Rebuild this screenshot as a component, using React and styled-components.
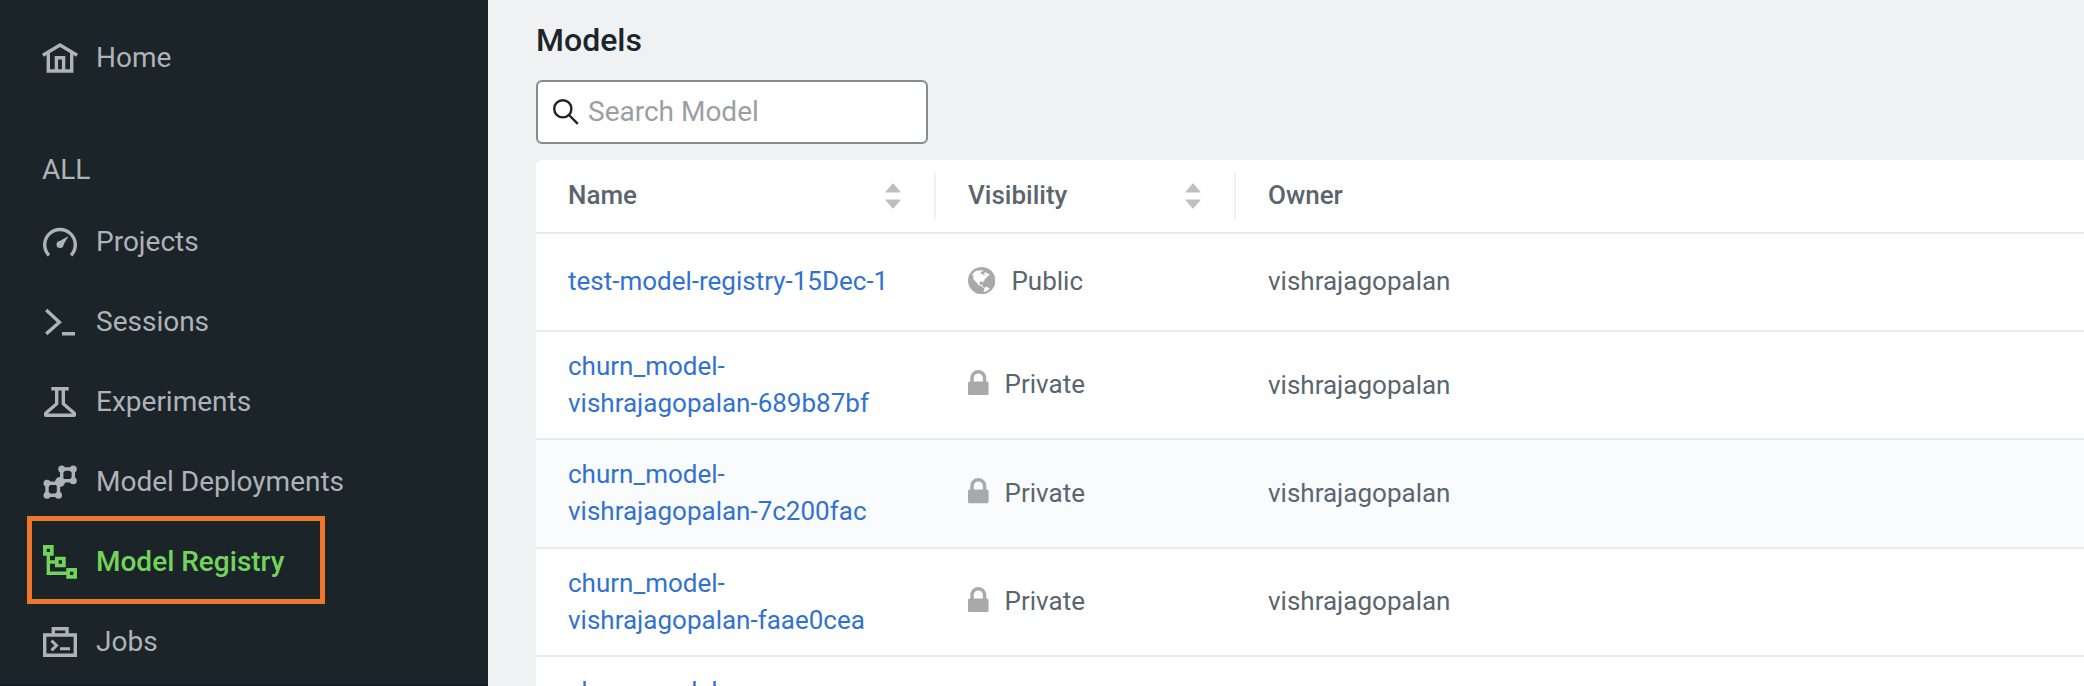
import React from 'react';
import styled, { createGlobalStyle } from 'styled-components';

const Global = createGlobalStyle`
  * { box-sizing: border-box; }
  body { margin: 0; overflow: hidden; font-family: Roboto, "Liberation Sans", sans-serif; }
`;

const Page = styled.div`
  display: flex;
  height: 686px;
  overflow: hidden;
  background: #f0f1f3;
`;

const Sidebar = styled.nav`
  flex: none;
  width: 488px;
  padding-top: 17px;
  background: #1a2429;
  border-bottom: 2px solid #151d26;
`;

const NavItem = styled.a`
  position: relative;
  display: flex;
  align-items: center;
  gap: 18px;
  height: 80px;
  padding-left: 42px;
  font-size: 28px;
  font-weight: ${p => (p.$active ? 500 : 400)};
  color: ${p => (p.$active ? '#73d45c' : '#afb2b8')};
`;

const NavIcon = styled.svg`
  flex: none;
  width: 36px;
  height: 36px;
  fill: none;
  stroke: currentColor;
  stroke-width: 3.4;
`;

const Highlight = styled.span`
  position: absolute;
  left: 27px;
  top: -5px;
  width: 298px;
  height: 88px;
  border: 5px solid #f0752d;
`;

const SectionTitle = styled.div`
  height: 104px;
  padding: 56px 0 0 42px;
  font-size: 28px;
  line-height: 33px;
  color: #afb2b8;
`;

const Content = styled.main`
  flex: 1;
  min-width: 0;
  padding-left: 48px;
`;

const Title = styled.h1`
  margin: 0;
  height: 80px;
  padding-top: 21px;
  font-size: 32px;
  line-height: 38px;
  font-weight: 500;
  color: #1b252b;
`;

const SearchBox = styled.label`
  display: flex;
  align-items: center;
  width: 392px;
  height: 64px;
  padding-left: 14px;
  gap: 8px;
  border: 2px solid #858b90;
  border-radius: 6px;
  background: #fff;
  margin-bottom: 16px;
`;

const SearchInput = styled.input`
  width: 300px;
  height: 40px;
  padding: 0 0 2px;
  border: 0;
  outline: 0;
  background: none;
  font: 400 28px Roboto, "Liberation Sans", sans-serif;
  &::placeholder { color: #9b9fa4; opacity: 1; }
`;

const Table = styled.div`
  background: #fff;
  border-top-left-radius: 6px;
  font-size: 26px;
  line-height: 37.14px;
  color: #5a656d;
`;

const Row = styled.div`
  display: grid;
  grid-template-columns: 400px 300px 1fr;
  align-items: center;
  height: ${p => p.$height}px;
  border-bottom: 2px solid #e9eaeb;
  background: ${p => (p.$hovered ? '#fafbfd' : 'transparent')};
`;

const HeadCell = styled.div`
  display: flex;
  align-items: center;
  justify-content: space-between;
  height: 46px;
  padding: 0 30px 0 32px;
  font-weight: 500;
  border-right: ${p => (p.$divider ? '2px solid #f0f0f0' : '0')};
`;

const Sorter = styled.span`
  display: flex;
  flex-direction: column;
  width: 22px;
  height: 38px;
  svg { display: block; width: 22px; height: 22px; flex: none; fill: #bfbfbf; }
  svg + svg { margin-top: -6px; }
`;

const Cell = styled.div`
  display: flex;
  align-items: center;
  padding: 0 0 0 32px;
`;

const ModelLink = styled.a`
  width: 336px;
  color: #3272cf;
`;

const VisibilityLabel = styled.span`
  display: flex;
  align-items: center;
  gap: 16px;
  padding-bottom: 0.4px;
  svg { flex: none; fill: #a9a9a9; margin-bottom: ${p => (p.$locked ? 4.4 : 2.6)}px; }
`;

const icons = {
  home: (
    <>
      <path d="M0.900 16.200L18 6l17.100 10.200" />
      <path d="M6.300 13.500V32h23.400V13.500M14.400 32V18.700h7.200V32" />
    </>
  ),
  gauge: (
    <>
      <path d="M6.900 32.300A15.300 15.300 0 1 1 29.100 32.300" />
      <circle cx="18" cy="21.400" r="3.500" fill="currentColor" stroke="none" />
      <path d="M16 19L26.500 13 20.500 23.500z" fill="currentColor" stroke="none" />
    </>
  ),
  prompt: <path d="M4.200 6.900L17.400 19.300 4.200 30.900M20 30.700h13" />,
  flask: (
    <path
      strokeLinejoin="round"
      d="M9.300 5.700h17.400M14.700 5.700v15L3.700 30.300v2h28.600v-2L21.300 20.700v-15"
    />
  ),
  deploy: (
    <>
      <path d="M19.700 6h11.600v11.700H19.700zM5 20.300h11.500v12H5z" />
      <g fill="currentColor" stroke="none">
        <circle cx="19.700" cy="6" r="3.500" />
        <circle cx="31.300" cy="6" r="3.500" />
        <circle cx="31.300" cy="17.700" r="3.500" />
        <circle cx="18" cy="19" r="5" />
        <circle cx="5" cy="20.300" r="3.500" />
        <circle cx="5" cy="32.300" r="3.500" />
        <circle cx="16.500" cy="32.300" r="3.500" />
      </g>
    </>
  ),
  registry: (
    <>
      <path d="M6.300 12v18.300H25M6.300 19H14" />
      <path
        strokeWidth="3.700"
        d="M2.850 3.850h7v7h-7zM14.850 15.500h7v7h-7zM26.150 26.850h7v7h-7z"
      />
    </>
  ),
  jobs: (
    <>
      <path d="M2.700 12h30.600v20.300H2.700zM11.300 11V5.700H25V11" />
      <path strokeWidth="3" d="M9.500 17.700l5 4.800-5 4.800M18 25.700h10" />
    </>
  ),
};

const navItems = [
  ['Projects', 'gauge'],
  ['Sessions', 'prompt'],
  ['Experiments', 'flask'],
  ['Model Deployments', 'deploy'],
  ['Model Registry', 'registry'],
  ['Jobs', 'jobs'],
];

const models = [
  { lines: ['test-model-registry-15Dec-1'], height: 98, isPublic: true },
  { lines: ['churn_model-', 'vishrajagopalan-689b87bf'], height: 108.28 },
  { lines: ['churn_model-', 'vishrajagopalan-7c200fac'], height: 108.28, hovered: true },
  { lines: ['churn_model-', 'vishrajagopalan-faae0cea'], height: 108.28 },
  { lines: ['churn_model-', 'vishrajagopalan'], height: 108.28 },
];

function SortIcon() {
  return (
    <Sorter>
      <svg viewBox="0 0 1024 1024">
        <path d="M858.9 689L530.5 308.200c-9.400-10.900-27.500-10.900-37 0L165.100 689c-12.200 14.200-1.200 35 18.500 35h656.800c19.700 0 30.700-20.800 18.500-35z" />
      </svg>
      <svg viewBox="0 0 1024 1024">
        <path d="M840.4 300H183.600c-19.700 0-30.700 20.800-18.500 35l328.400 380.800c9.400 10.900 27.500 10.900 37 0L858.900 335c12.200-14.200 1.200-35-18.500-35z" />
      </svg>
    </Sorter>
  );
}

function LockIcon() {
  return (
    <svg width="20.570" height="25.140" viewBox="320 128 1152 1408">
      <path d="M640 768h512v-192q0-106-75-181t-181-75-181 75-75 181v192zm832 96v576q0 40-28 68t-68 28h-960q-40 0-68-28t-28-68v-576q0-40 28-68t68-28h32v-192q0-184 132-316t316-132 316 132 132 316v192h32q40 0 68 28t28 68z" />
    </svg>
  );
}

function GlobeIcon() {
  return (
    <svg width="27.430" height="27.430" viewBox="0 128 1536 1536">
      <path d="M768 128q209 0 385.5 103t279.5 279.5 103 385.5-103 385.5-279.5 279.5-385.5 103-385.5-103-279.5-279.5-103-385.5 103-385.5 279.5-279.5 385.5-103zm274 521q-2 1-9.5 9.5t-13.5 9.5q2 0 4.5-5t5-11 3.5-7q6-7 22-15 14-6 52-12 34-8 51 11-2-2 9.5-13t14.5-12q3-2 15-4.5t15-7.5l2-22q-12 1-17.5-7t-6.5-21q0 2-6 8 0-7-4.5-8t-11.5 1-9 1q-10-3-15-7.5t-8-16.5-4-15q-2-5-9.5-11t-9.5-10q-1-2-2.5-5.5t-3-6.5-4-5.5-5.5-2.5-7 5-7.5 10-4.5 5q-3-2-6-1.5t-4.5 1-4.5 3-5 3.5q-3 2-8.5 3t-8.5 2q15-5-1-11-10-4-16-3 9-4 7.5-12t-8.500-14h5q-1-4-8.5-8.5t-17.500-8.500-13-6q-8-5-34-9.500t-33-.5q-5 6-4.500 10.500t4 14 3.500 12.500q1 6-5.500 13t-6.500 12q0 7 14 15.500t10 21.500q-3 8-16 16t-16 12q-5 8-1.500 18.500t10.500 16.500q2 2 1.500 4t-3.500 4.500-5.500 4-6.500 3.500l-3 2q-11 5-20.500-6t-13.500-26q-7-25-16-30-23-8-29 1-5-13-41-26-25-9-58-4 6-1 0-15-7-15-19-12 3-6 4-17.500t1-13.500q3-13 12-23 1-1 7-8.500t9.500-13.500.5-6q35 4 50-11 5-5 11.500-17t10.500-17q9-6 14-5.500t14.500 5.500 14.500 5q14 1 15.500-11t-7.500-20q12 1 3-17-4-7-8-9-12-4-27 5-8 4 2 8-1-1-9.500 10.500t-16.500 17.500-16-5q-1-1-5.500-13.500t-9.500-13.500q-8 0-16 15 3-8-11-15t-24-8q19-12-8-27-7-4-20.500-5t-19.500 4q-5 7-5.500 11.500t5 8 10.500 5.500 11.500 4 8.500 3q14 10 8 14-2 1-8.500 3.500t-11.500 4.500-6 4q-3 4 0 14t-2 14q-5-5-9-17.500t-7-16.500q7 9-25 6l-10-1q-4 0-16 2t-20.500 1-13.500-8q-4-8 0-20 1-4 4-2-4-3-11-9.500t-10-8.500q-46 15-94 41 6 1 12-1 5-2 13-6.500t10-5.500q34-14 42-7l5-5q14 16 20 25-7-4-30-1-20 6-22 12 7 12 5 18-4-3-11.500-10t-14.500-11-15-5q-16 0-22 1-146 80-235 222 7 7 12 8 4 1 5 9t2.500 11 11.500-3q9 8 3 19 1-1 44 27 19 17 21 21 3 11-10 18-1-2-9-9t-9-4q-3 5 .5 18.500t10.500 12.500q-7 0-9.500 16t-2.500 35.500-1 23.500l2 1q-3 12 5.500 34.500t21.500 19.500q-13 3 20 43 6 8 8 9 3 2 12 7.500t15 10 10 10.500q4 5 10 22.500t14 23.500q-2 6 9.500 20t10.500 23q-1 0-2.500 1t-2.500 1q3 7 15.500 14t15.500 13q1 3 2 10t3 11 8 2q2-20-24-62-15-25-17-29-3-5-5.500-15.500t-4.500-14.500q2 0 6 1.500t8.500 3.500 7.500 4 2 3q-3 7 2 17.500t12 18.500 17 19 12 13q6 6 14 19.500t0 13.500q9 0 20 10.500t17 19.500q5 8 8 26t5 24q2 7 8.500 13.500t12.500 9.500l16 8 13 7q5 2 18.500 10.500t21.500 11.500q10 4 16 4t14.500-2.500 13.500-3.500q15-2 29 15t21 21q36 19 55 11-2 1 .5 7.500t8 15.500 9 14.500 5.500 8.500q5 6 18 15t18 15q6-4 7-9-3 8 7 20t18 10q14-3 14-32-31 15-49-18 0-1-2.500-5.500t-4-8.500-2.500-8.500 0-7.500 5-3q9 0 10-3.500t-2-12.500-4-13q-1-8-11-20t-12-15q-5 9-16 8t-16-9q0 1-1.500 5.500t-1.500 6.500q-13 0-15-1 1-3 2.500-17.500t3.500-22.500q1-4 5.500-12t7.500-14.500 4-12.500-4.500-9.500-17.500-2.500q-19 1-26 20-1 3-3 10.500t-5 11.500-9 7q-7 3-24 2t-24-5q-13-8-22.500-29t-9.500-37q0-10 2.500-26.500t3-25-5.500-24.500q3-2 9-9.500t10-10.500q2-1 4.500-1.500t4.500 0 4-1.500 3-6q-1-1-4-3-3-3-4-3 7 3 28.500-1.500t27.500 1.500q15 11 22-2 0-1-2.500-9.500t-.5-13.500q5 27 29 9 3 3 15.500 5t17.500 5q3 2 7 5.500t5.500 4.500 5-.5 8.500-6.500q10 14 12 24 11 40 19 44 7 3 11 2t4.500-9.500 0-14-1.500-12.500l-1-8v-18l-1-8q-15-3-18.500-12t1.500-18.500 15-18.500q1-1 8-3.500t15.500-6.500 12.500-8q21-19 15-35 7 0 11-9-1 0-5-3t-7.500-5-4.500-2q9-5 2-16 5-3 7.500-11t7.500-10q9 12 21 2 7-8 1-16 5-7 20.500-10.500t18.500-9.500q7 2 8-2t1-12 3-12q4-5 15-9t13-5l17-11q3-4 0-4 18 2 31-11 10-11-6-20 3-6-3-9.500t-15-5.500q3-1 11.500-.5t10.500-1.500q15-10-7-16-17-5-43 12zm-163 877q206-36 351-189-3-3-12.500-4.500t-12.500-3.500q-18-7-24-8 1-7-2.500-13t-8-9-12.500-8-11-7q-2-2-7-6t-7-5.500-7.500-4.500-8.500-2-10 1l-3 1q-3 1-5.500 2.500t-5.500 3-4 3 0 2.500q-21-17-36-22-5-1-11-5.500t-10.500-7-10-1.500-11.500 7q-5 5-6 15t-2 13q-7-5 0-17.500t2-18.500q-3-6-10.500-4.500t-12 4.500-11.500 8.500-9 6.500-8.500 5.500-8.500 7.500q-3 4-6 12t-5 11q-2-4-11.500-6.500t-9.500-5.500q2 10 4 35t5 38q7 31-12 48-27 25-29 40-4 22 12 26 0 7-8 20.500t-7 21.500q0 6 2 16z" />
    </svg>
  );
}

function NavEntry({ label, icon }) {
  const active = label === 'Model Registry';
  return (
    <NavItem $active={active}>
      {active && <Highlight />}
      <NavIcon viewBox="0 0 36 36">{icons[icon]}</NavIcon>
      {label}
    </NavItem>
  );
}

export default function App() {
  return (
    <Page>
      <Global />
      <Sidebar>
        <NavEntry label="Home" icon="home" />
        <SectionTitle>ALL</SectionTitle>
        {navItems.map(([label, icon]) => (
          <NavEntry key={label} label={label} icon={icon} />
        ))}
      </Sidebar>
      <Content>
        <Title>Models</Title>
        <SearchBox>
          <svg width="28" height="28" viewBox="0 0 28 28" fill="none" stroke="#1b252b" strokeWidth="2.400">
            <circle cx="10.800" cy="10.800" r="8.600" />
            <path d="M17 17l8.800 8.800" />
          </svg>
          <SearchInput placeholder="Search Model" />
        </SearchBox>
        <Table>
          <Row $height={74}>
            <HeadCell $divider>Name<SortIcon /></HeadCell>
            <HeadCell $divider>Visibility<SortIcon /></HeadCell>
            <HeadCell>Owner</HeadCell>
          </Row>
          {models.map((m, i) => (
            <Row key={i} $height={m.height} $hovered={m.hovered}>
              <Cell>
                <ModelLink>
                  {m.lines.map(line => <div key={line}>{line}</div>)}
                </ModelLink>
              </Cell>
              <Cell>
                <VisibilityLabel $locked={!m.isPublic}>
                  {m.isPublic ? <GlobeIcon /> : <LockIcon />}
                  {m.isPublic ? 'Public' : 'Private'}
                </VisibilityLabel>
              </Cell>
              <Cell>vishrajagopalan</Cell>
            </Row>
          ))}
        </Table>
      </Content>
    </Page>
  );
}
